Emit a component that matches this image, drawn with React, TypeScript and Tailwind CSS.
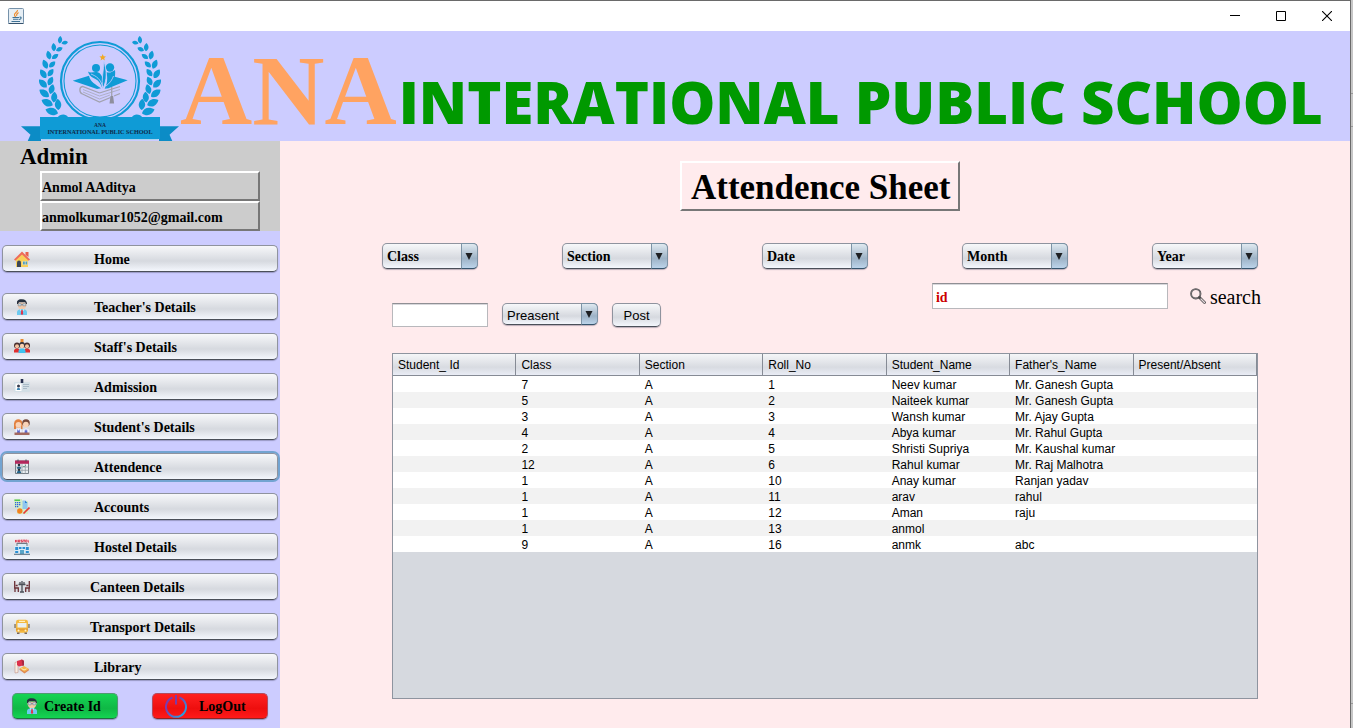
import type { ReactNode } from "react";

type NavItem = { label: string; icon: ReactNode; indent?: string; gap?: string; focused?: boolean };

function Svg({ children, className = "h-4 w-4" }: { children: ReactNode; className?: string }) {
  return (
    <svg viewBox="0 0 16 16" className={`${className} shrink-0`} aria-hidden="true">
      {children}
    </svg>
  );
}

const HomeIcon = (
  <Svg>
    <path d="M2 8 8 3l6 5v8H2z" fill="#f9cf5b" />
    <path d="M11.5 1h3v5l-3-2z" fill="#e8604f" />
    <path d="M0 8.500 8 .5l8 8-1.300 1.200L8 3.600 1.300 9.700z" fill="#ef6b58" />
    <path d="M3 16v-4.500a2 2 0 0 1 4 0V16z" fill="#3d4757" />
    <path d="M8.500 10h5v4h-5z" fill="#f4e6b5" />
    <path d="M9 10.500h1.800v3H9zM11.500 10.500h1.700v3h-1.700z" fill="#4e9dc4" />
  </Svg>
);

function Teacher({ className }: { className?: string }) {
  return (
    <Svg className={className}>
      <path d="M3.500 5c0 3.500 2 5.500 4.500 5.500s4.500-2 4.500-5.500V3.500h-9z" fill="#f3c9a8" />
      <path d="M3 5V2.500C4 .5 6 0 8 .2c3 0 5 1.500 5 4.800h-1l-.8-1.800H5L4 5z" fill="#26303f" />
      <path d="M4.200 4.800h3v2h-3zM8.800 4.800h3v2h-3zM7.200 5.500h1.600" fill="#d9eef5" stroke="#6b7787" strokeWidth=".6" />
      <path d="M3 16v-3.500C3.500 11 5.500 10 8 10s4.500 1 5 2.500V16z" fill="#6ccaf0" />
      <path d="m6 10 2 1.600L10 10l-.5 1.800h-3z" fill="#fff" />
      <path d="M7.300 11h1.400l.5 4-1.200 1-1.200-1z" fill="#e1344b" />
    </Svg>
  );
}

const StaffIcon = (
  <Svg>
    <path d="M6.500 0h3v4h-3z" fill="#e88a30" />
    <circle cx="3" cy="6.500" r="3" fill="#4a3030" />
    <circle cx="13" cy="6.500" r="3" fill="#4a3030" />
    <circle cx="3" cy="7.300" r="2" fill="#f4c3a0" />
    <circle cx="13" cy="7.300" r="2" fill="#f4c3a0" />
    <path d="M0 13.500v-2C.5 10 1.500 9.500 3 9.500s3 .5 3 4zM16 13.500v-2c-.5-1.500-1.500-2-3-2s-3 .5-3 4z" fill="#e02f2f" />
    <circle cx="8" cy="6" r="2.900" fill="#33333d" />
    <circle cx="8" cy="7" r="2.200" fill="#f7cfae" />
    <path d="M4.500 14v-2c.5-2 1.500-2.500 3.500-2.500s3 .5 3.500 2.500v2z" fill="#3fc2ee" />
  </Svg>
);

const AdmissionIcon = (
  <Svg>
    <rect y="3" width="16" height="10" rx="1" fill="#d3dfe6" />
    <rect x="1.500" y="4.500" width="6" height="7.500" fill="#fff" />
    <path d="M6.700 0h2.600v4H6.700z" fill="#26304f" />
    <circle cx="4.500" cy="7" r="1.500" fill="#343a4c" />
    <path d="M2.800 11c0-3 3.400-3 3.400 0z" fill="#3e86b4" />
    <path d="M9 5.500h6M9 7.500h6M9 9.500h4" stroke="#a8bac6" />
  </Svg>
);

const StudentIcon = (
  <Svg>
    <circle cx="4.300" cy="4.500" r="4.200" fill="#e2803f" />
    <path d="M0 4h2v6H0zM7 4h1.500v6H7z" fill="#e2803f" />
    <circle cx="12" cy="4" r="3.800" fill="#75483b" />
    <circle cx="4.500" cy="5.800" r="2.900" fill="#f9d3b8" />
    <circle cx="11.900" cy="5.600" r="2.900" fill="#f9d3b8" />
    <path d="M1.500 14v-3c1-2 5-2 6 0v3zM9 14v-3c1-2 5-2 6 0v3z" fill="#eef0ff" />
    <path d="m3.500 10 1 2L5.500 10l.5 4H3zM11 10l1 2 1-2 .5 4h-3z" fill="#5968cf" />
    <path d="M.5 13.500h15V16H.5z" fill="#a2685f" />
  </Svg>
);

const AttendanceIcon = (
  <Svg>
    <path d="M1.500 2h13v12.500h-13z" fill="#e9eef2" stroke="#59636c" strokeWidth=".8" />
    <path d="M1 1.500h14v3.300H1z" fill="#b4275c" />
    <path d="M4 .5v2M12 .5v2" stroke="#4a4f58" />
    <path d="M8 5v9.500M11.300 5v9.500M1.500 8h13M1.500 11.300h13" stroke="#8e989f" strokeWidth=".7" />
    <circle cx="5" cy="6" r="1.300" fill="#26303c" />
    <path d="M2.800 9.800c0-3 4.400-3 4.400 0zM2.800 14c0-3 4.400-3 4.400 0z" fill="#25658b" />
    <circle cx="5" cy="10.800" r="1.200" fill="#26303c" />
    <path d="m9 7 1 1 2-2" fill="none" stroke="#4d8c72" strokeWidth=".7" />
  </Svg>
);

const AccountsIcon = (
  <Svg>
    <path d="M0 0h8v9H0zM7 2h7v13H3V8h4z" fill="#d5edc5" />
    <path d="M.5.500H6V2H.5z" fill="#54c454" />
    <path d="M1 3h1.300v1.300H1zM3 3h1.300v1.300H3zM5 3h1.300v1.300H5zM1 5h1.300v1.300H1zM3 5h1.300v1.300H3zM5 5h1.300v1.300H5zM1 7h1.300v1.300H1zM3 7h1.300v1.300H3z" fill="#2c62e0" />
    <path d="M8.500 1.500H11L13.500 4v6h-5z" fill="#90c7ef" />
    <path d="M11 1.500 13.500 4H11z" fill="#2d80d4" />
    <circle cx="5.800" cy="12" r="2.700" fill="#f2811f" />
    <path d="m9.500 14.500 6-6" stroke="#e63a35" strokeWidth="1.700" />
  </Svg>
);

const HostelIcon = (
  <Svg>
    <path d="M1 .3h14v3.400H1z" fill="#f3d7dc" />
    <path d="M1.500 1v2.300M3 1v2.300M1.500 2H3M4.500 1.200h1.200v1.800H4.500zM8.400 1.200H7v.8h1.400v1H7M9.200 1.200H11M10.100 1v2.300M13 1.200h-1.300v1.800H13M14 1v2h1" fill="none" stroke="#d93850" strokeWidth=".9" />
    <path d="M3 4h10v3h2.500v8H.5V7H3z" fill="#dcebf5" />
    <path d="M3 3.800h10v1.200H3zM2.500 4h1v3h-1zM12.500 4h1v3h-1z" fill="#6e7a86" />
    <path d="M1.200 8h3v3h-3zM5 8h2.500v2H5zM8.500 8H11v2H8.500zM11.800 8h3v3h-3zM1.200 12h3v2h-3zM11.800 12h3v2h-3z" fill="#2c8fd2" />
    <path d="M6 11h4v4H6z" fill="#5aa6c9" />
    <path d="M0 14.800h16v.9H0z" fill="#40586b" />
  </Svg>
);

const CanteenIcon = (
  <Svg>
    <path d="M.7 2v7h3.600v4M1 9v4M1.700 6.500h2" fill="none" stroke="#6a3036" strokeWidth="1.300" />
    <path d="M15.300 2v7h-3.600v4M15 9v4M14.300 6.500h-2" fill="none" stroke="#6a3036" strokeWidth="1.300" />
    <path d="M4.500 5.500h7M8 5v8M6 13h4M6 3v2M10 3v2M8 2v3" stroke="#4b5058" strokeWidth="1.300" />
  </Svg>
);

const BusIcon = (
  <Svg>
    <path d="M.3 5h1.500v4H.3zM14.200 5h1.500v4h-1.500z" fill="#8b7d68" />
    <rect x="2" y=".8" width="12" height="13" rx="2.200" fill="#f5b93f" />
    <path d="M5 1.800h6v1.200H5z" fill="#fff0be" />
    <path d="M3.500 4h9v4.500h-9z" fill="#e9eff0" />
    <path d="M2 9.500h12v2H2z" fill="#e39d33" />
    <circle cx="4.500" cy="11.500" r="1" fill="#fff3c9" />
    <circle cx="11.500" cy="11.500" r="1" fill="#fff3c9" />
    <path d="M3 13.500h2.500V15H3zM10.500 13.500H13V15h-2.500z" fill="#77685a" />
  </Svg>
);

const LibraryIcon = (
  <Svg>
    <path d="M1 3.500 4 2.500v11L1 14z" fill="#f8ede0" stroke="#b98376" strokeWidth=".5" />
    <path d="m3 2 5-1.500 2 1.300v4.500L5 7.500 3 6z" fill="#dc304a" />
    <path d="m7.500.6 2.500 1.500v4.200l-1.500.6z" fill="#a82840" />
    <path d="m5.500 9.500 4.500-2.500 5 3-4.500 3.500z" fill="#f5b64c" />
    <path d="m5.500 9.500 5 3.300 4.500-2.800v1.200L10.500 14.500l-5-3.800z" fill="#e08850" />
    <path d="m7.500 9.500 2.500 1.500 2.500-1.200" fill="none" stroke="#fff0c5" strokeWidth=".9" />
  </Svg>
);

const navItems: NavItem[] = [
  { label: "Home", icon: HomeIcon, gap: "mb-2" },
  { label: "Teacher's Details", icon: <Teacher /> },
  { label: "Staff's Details", icon: StaffIcon },
  { label: "Admission", icon: AdmissionIcon },
  { label: "Student's Details", icon: StudentIcon },
  { label: "Attendence", icon: AttendanceIcon, focused: true },
  { label: "Accounts", icon: AccountsIcon },
  { label: "Hostel Details", icon: HostelIcon },
  { label: "Canteen Details", icon: CanteenIcon, indent: "gap-15" },
  { label: "Transport Details", icon: BusIcon, indent: "gap-15" },
  { label: "Library", icon: LibraryIcon },
];

const columns = ["Student_ Id", "Class", "Section", "Roll_No", "Student_Name", "Father's_Name", "Present/Absent"];

const rows = [
  ["", "7", "A", "1", "Neev kumar", "Mr. Ganesh Gupta", ""],
  ["", "5", "A", "2", "Naiteek kumar", "Mr. Ganesh Gupta", ""],
  ["", "3", "A", "3", "Wansh kumar", "Mr. Ajay Gupta", ""],
  ["", "4", "A", "4", "Abya kumar", "Mr. Rahul Gupta", ""],
  ["", "2", "A", "5", "Shristi Supriya", "Mr. Kaushal kumar", ""],
  ["", "12", "A", "6", "Rahul kumar", "Mr. Raj Malhotra", ""],
  ["", "1", "A", "10", "Anay kumar", "Ranjan yadav", ""],
  ["", "1", "A", "11", "arav", "rahul", ""],
  ["", "1", "A", "12", "Aman", "raju", ""],
  ["", "1", "A", "13", "anmol", "", ""],
  ["", "9", "A", "16", "anmk", "abc", ""],
];

const raised =
  "rounded-[5px] border border-[#8f939e] border-b-[#4a4f59] bg-linear-to-b from-[#f7f8fa] via-[#d6d9df] via-60% to-[#f4f7fd] shadow-[0_1px_1px_rgba(60,60,90,0.35)]";

/* One laurel branch: leaf pairs spread along an arc left of the crest. */
const leafPairs = Array.from({ length: 9 }, (_, i) => {
  const deg = 138 + i * 10;
  const a = (deg * Math.PI) / 180;
  return { x: 80 + Math.cos(a) * 53, y: 43 - Math.sin(a) * 53, turn: 180 - deg, size: 0.66 + i * 0.06 };
});

function Branch() {
  return (
    <g fill="#0f9bd6">
      {leafPairs.map((p) => (
        <g key={p.turn} transform={`translate(${p.x} ${p.y}) rotate(${p.turn}) scale(${p.size})`}>
          <path transform="translate(-1 1) rotate(-36)" d="M0 0C-4.500-3-4-8 0-11.500 4-8 4.500-3 0 0z" />
          <path transform="translate(1 -1) rotate(34)" d="M0 0C-4-3-3.500-7 0-10 3.500-7 4-3 0 0z" />
        </g>
      ))}
    </g>
  );
}

function Crest() {
  return (
    <svg viewBox="0 0 160 105" className="h-[105px] w-40 shrink-0" role="img" aria-label="ANA International Public School crest">
      <Branch />
      <g transform="translate(160 0) scale(-1 1)">
        <Branch />
      </g>
      <circle cx="80" cy="45" r="39" fill="none" stroke="#0f9bd6" strokeWidth="2.200" />
      <circle cx="80" cy="45" r="36" fill="none" stroke="#0f9bd6" strokeWidth="1.100" />
      <g fill="none" stroke="#a2a2ae" strokeWidth="1.300">
        <path d="m79.500 57-17-6.500c-3.500.5-3.500 6 0 7.500L79.500 66l11-4.500M94 60l6-2.500M79.500 57 100 50.500" />
        <path d="m63 53.500 16.500 6.500 20.500-6.500M63 56l16.500 7L90 59" strokeWidth=".7" />
        <path d="M91.700 51v10" />
      </g>
      <path d="M90.500 60h2.600l1 7.500h-4.600z" fill="#8f8f9e" />
      <path d="m82.700 18 .9 2.200 2.400.2-1.800 1.600.6 2.400-2.100-1.300-2.100 1.300.6-2.400-1.800-1.600 2.400-.2z" fill="#f2a922" />
      <path d="M52.700 44.700 69 39.700c1 6 7 9 12 12.600l-4 .8zM107.700 44.300 94 40.500c-2 5-5 9-9.500 12.200l4-.4z" fill="#0f9bd6" />
      <g fill="#0f9bd6">
        <circle cx="76" cy="31.900" r="4" />
        <path d="M68 35.500c2.500 2 6 0 9 .5 3.500.8 5.500 4 6 9l-.7 7.300c-2-6-4.500-8.300-8.300-10-3.500-1.400-5-3.600-6-6.800z" />
        <circle cx="90" cy="31.500" r="4.200" />
        <path d="M86.500 36c3 1.500 5.500 0 8.500-2 .8 6-.5 14-10.200 18.500 3-6 2.700-11 1.700-16.500z" />
      </g>
      <path d="M82.800 52.500C81 43 84 34 83.900 25c2.800 9 3.600 19-1.100 27.500z" fill="#0f9bd6" stroke="#ccccff" strokeWidth=".8" />
      <path d="M71 38c5 2 10 5 11.500 13M86 50c4-3 6-6 7.500-10" fill="none" stroke="#ccccff" strokeWidth=".8" />
      <path d="M37 82c3-4.500 9-4.500 11-1zM112 81c2-3.500 8-3.500 11 1z" fill="#0f9bd6" />
      <path d="M1 90.300h20V105H7.700l2.800-6.300z" fill="#0c8cc6" />
      <path d="M159 90.300h-20V105h13.300l-2.800-6.300z" fill="#0c8cc6" />
      <path d="M20 81h120v22H20z" fill="#0f9bd6" />
      <path d="M22 103.500h116" stroke="#a9d4f2" />
      <g fill="#102a48" fontFamily="'Liberation Serif', serif" fontWeight="700" textAnchor="middle">
        <text x="80" y="91.300" fontSize="5.500">ANA</text>
        <text x="80" y="97.800" fontSize="6.200">INTERNATIONAL PUBLIC SCHOOL</text>
      </g>
    </svg>
  );
}

function JavaIcon() {
  return (
    <svg viewBox="0 0 16 16" className="h-4 w-4" aria-hidden="true">
      <rect x=".5" y=".5" width="15" height="15" rx="1" fill="#e6eef4" stroke="#7692aa" />
      <path d="M.5 15.500h15" stroke="#35536e" />
      <path d="M9.500 2C10 4 6 5 6.500 7c.2 1 1 1.500 1 2M10.500 4.500C9 5.500 8 6 8.700 8" fill="none" stroke="#ee8b2c" strokeWidth="1.200" />
      <path d="M4.500 9.500h6.500M5 11.300h5.500M11.500 9.200c2.500-.5 2 2-.5 2.300M3.500 13.500h8.500" fill="none" stroke="#3f7295" strokeWidth="1.100" />
    </svg>
  );
}

function Combo({ label, plain, className }: { label: string; plain?: boolean; className: string }) {
  return (
    <div className={`relative ${className}`}>
      <select
        aria-label={label}
        className={`${raised} block h-full w-full appearance-none pt-0.5 pr-5 pl-1 text-black outline-none ${
          plain ? "font-['Liberation_Sans',sans-serif] text-[13px]" : "text-sm font-bold"
        }`}
      >
        <option>{label}</option>
      </select>
      <span className="pointer-events-none absolute inset-y-0 right-0 flex w-[17px] items-center justify-center rounded-r-[5px] border border-[#7d93a5] border-b-[#35546d] bg-linear-to-b from-[#e0e9f0] via-[#9db2c6] via-60% to-[#bcd4ea] pr-px">
        <svg viewBox="0 0 8 7" className="h-[7px] w-2" aria-hidden="true">
          <path d="M.5 0h7L4 7z" fill="#1d1f22" />
        </svg>
      </span>
    </div>
  );
}

export default function App() {
  return (
    <div className="flex min-h-screen bg-[#ffebed] font-['Liberation_Serif',serif] text-black">
      <div className="flex min-w-0 flex-1 flex-col border-t border-r border-[#6a6a6a]">
        <div className="flex h-[30px] items-center justify-between bg-white pr-[18px] pl-2">
          <JavaIcon />
          <div className="flex gap-9">
            <button type="button" aria-label="Minimize">
              <svg viewBox="0 0 10 10" className="h-2.5 w-2.5"><path d="M0 4.500h10" stroke="#000" /></svg>
            </button>
            <button type="button" aria-label="Maximize">
              <svg viewBox="0 0 10 10" className="h-2.5 w-2.5"><path d="M.5.500h9v9h-9z" fill="none" stroke="#000" /></svg>
            </button>
            <button type="button" aria-label="Close">
              <svg viewBox="0 0 10 10" className="h-2.5 w-2.5"><path d="m0 0 10 10M10 0 0 10" stroke="#000" strokeWidth="1.100" /></svg>
            </button>
          </div>
        </div>

        <header className="flex h-[110px] items-end bg-[#ccccff] pl-5">
          <Crest />
          <h1 className="flex items-baseline gap-0.5 font-bold whitespace-nowrap">
            <span className="text-[100px] leading-[100px] text-[#ffa361]">ANA</span>
            <span className="font-['Open_Sans','Noto_Sans',sans-serif] text-[58px] leading-[60px] font-extrabold text-[#009900]">
              INTERATIONAL PUBLIC SCHOOL
            </span>
          </h1>
        </header>

        <div className="flex flex-1">
          <aside className="w-[280px] shrink-0 bg-[#ccccff]">
            <section className="bg-[#cccccc] pr-5 pl-10">
              <h2 className="-ml-5 h-[30px] text-[23px] leading-8 font-bold">Admin</h2>
              <p className="h-[30px] border-2 border-t-white border-r-[#777777] border-b-[#777777] border-l-white text-sm leading-[29px] font-bold">
                Anmol AAditya
              </p>
              <p className="h-[30px] border-2 border-t-white border-r-[#777777] border-b-[#777777] border-l-white text-sm leading-[29px] font-bold">
                anmolkumar1052@gmail.com
              </p>
            </section>

            <nav className="flex flex-col gap-[13px] px-0.5 pt-3.5 pb-[13px]">
              {navItems.map((item) => (
                <button
                  key={item.label}
                  type="button"
                  className={`${raised} flex h-[27px] items-center pl-[11px] text-left text-sm font-bold ${item.indent ?? "gap-16"} ${item.gap ?? ""} ${
                    item.focused ? "ring-2 ring-[#73a4d1]" : ""
                  }`}
                >
                  {item.icon}
                  <span className="pt-0.5">{item.label}</span>
                </button>
              ))}
            </nav>

            <div className="flex justify-between px-3 pb-2">
              <button
                type="button"
                className="flex h-[26px] w-[106px] items-center gap-1 rounded-[5px] border border-[#4f9a72] border-b-[#1d7040] bg-linear-to-b from-[#16d455] via-[#0fb845] via-60% to-[#14d452] pl-[11px] text-sm font-bold shadow-[0_1px_1px_rgba(60,60,90,0.4)]"
              >
                <Teacher />
                <span className="pt-0.5">Create Id</span>
              </button>
              <button
                type="button"
                className="flex h-[26px] w-[116px] items-center gap-3 rounded-[5px] border border-[#b54a5c] border-b-[#8f2323] bg-linear-to-b from-[#ff2020] via-[#ee0e0e] via-60% to-[#ff1a1a] pl-3 text-sm font-bold shadow-[0_1px_1px_rgba(60,60,90,0.4)]"
              >
                <svg viewBox="0 0 22 24" className="h-6 w-[22px] shrink-0" aria-hidden="true">
                  <defs>
                    <linearGradient id="power" x1="0" y1="0" x2="1" y2="1">
                      <stop offset=".3" stopColor="#7a3bb0" />
                      <stop offset="1" stopColor="#13b8ee" />
                    </linearGradient>
                  </defs>
                  <path d="M7.500 3.500a10 10 0 1 0 7 0" fill="none" stroke="url(#power)" strokeWidth="2" />
                  <path d="M11 1v9.500" stroke="#7d3aa8" strokeWidth="2" />
                </svg>
                <span className="pt-0.5">LogOut</span>
              </button>
            </div>
          </aside>

          <main className="flex min-w-0 flex-1 flex-col pt-5">
            <div className="flex justify-center pl-2.5">
              <h2 className="h-[50px] w-[280px] border-2 border-t-white border-r-[#777777] border-b-[#777777] border-l-white pl-[9px] text-[35px] leading-[50px] font-bold whitespace-nowrap">
                Attendence Sheet
              </h2>
            </div>

            <div className="mt-8 mr-[92px] ml-[102px] grid grid-cols-[180fr_200fr_200fr_190fr_106px]">
              <Combo label="Class" className="h-[26px] w-24" />
              <Combo label="Section" className="h-[26px] w-[106px]" />
              <Combo label="Date" className="h-[26px] w-[106px]" />
              <Combo label="Month" className="h-[26px] w-[106px]" />
              <Combo label="Year" className="h-[26px] w-[106px]" />
            </div>

            <div className="mt-3.5 mr-[89px] ml-28 flex items-start justify-between">
              <div className="flex gap-3.5 pt-5">
                <input
                  type="text"
                  aria-label="Student id"
                  className="h-6 w-24 border border-[#b8b8bc] border-t-[#8f8f94] bg-white px-1 text-sm shadow-[inset_0_1px_0_#d8d8dc] outline-none"
                />
                <Combo label="Preasent" plain className="h-[22px] w-24" />
                <button type="button" className={`${raised} h-6 w-[49px] pt-px font-['Liberation_Sans',sans-serif] text-[13px]`}>
                  Post
                </button>
              </div>
              <form className="flex items-start gap-[22px]" onSubmit={(e) => e.preventDefault()}>
                <input
                  type="text"
                  aria-label="Search by id"
                  defaultValue="id"
                  className="h-[26px] w-[236px] border border-[#b8b8bc] border-t-[#8f8f94] bg-white px-[3px] pt-1 text-sm font-bold text-[#cc0000] shadow-[inset_0_1px_0_#d8d8dc] outline-none"
                />
                <button type="submit" className="flex h-7 items-center gap-1 text-xl">
                  <svg viewBox="0 0 16 16" className="mb-0.5 h-4 w-4" aria-hidden="true">
                    <circle cx="5.800" cy="5.800" r="4.700" fill="none" stroke="#4c4a4c" strokeWidth="1.800" />
                    <circle cx="5.800" cy="5.800" r="4.700" fill="none" stroke="#aaa5a8" strokeWidth=".5" />
                    <path d="m9.500 9.500 5 5" stroke="#4c4a4c" strokeWidth="2.800" strokeLinecap="round" />
                    <path d="m11 11 3.500 3.500" stroke="#e5dadd" strokeWidth="1.200" strokeLinecap="round" />
                  </svg>
                  search
                </button>
              </form>
            </div>

            <div className="mt-[26px] mr-[92px] mb-[29px] ml-28 flex-1 border border-[#8e949f] bg-[#d6d9df] font-['Liberation_Sans',sans-serif] text-xs">
              <table className="w-full table-fixed border-separate border-spacing-0">
                <thead>
                  <tr className="bg-linear-to-b from-[#f5f6f8] via-[#d8dbe1] via-60% to-[#eceff8]">
                    {columns.map((c) => (
                      <th key={c} className="border-r border-b border-[#868b95] p-0 pt-0.5 pl-[5px] text-left leading-[19px] font-normal whitespace-nowrap">
                        {c}
                      </th>
                    ))}
                  </tr>
                </thead>
                <tbody>
                  {rows.map((row, i) => (
                    <tr key={i} className="bg-white even:bg-[#f2f2f2]">
                      {row.map((cell, j) => (
                        <td key={j} className="h-4 p-0 pt-0.5 pl-[5px] leading-[14px] whitespace-nowrap">
                          {cell}
                        </td>
                      ))}
                    </tr>
                  ))}
                </tbody>
              </table>
            </div>
          </main>
        </div>
      </div>

      <div className="flex w-0.5 shrink-0 flex-col bg-[#c6c6c6]">
        <div className="h-[94px] border-b border-[#999999]" />
        <div className="h-[33px] border-b border-[#999999]" />
        <div className="flex-1" />
        <div className="h-[25px] border-t border-[#999999]" />
      </div>
    </div>
  );
}
